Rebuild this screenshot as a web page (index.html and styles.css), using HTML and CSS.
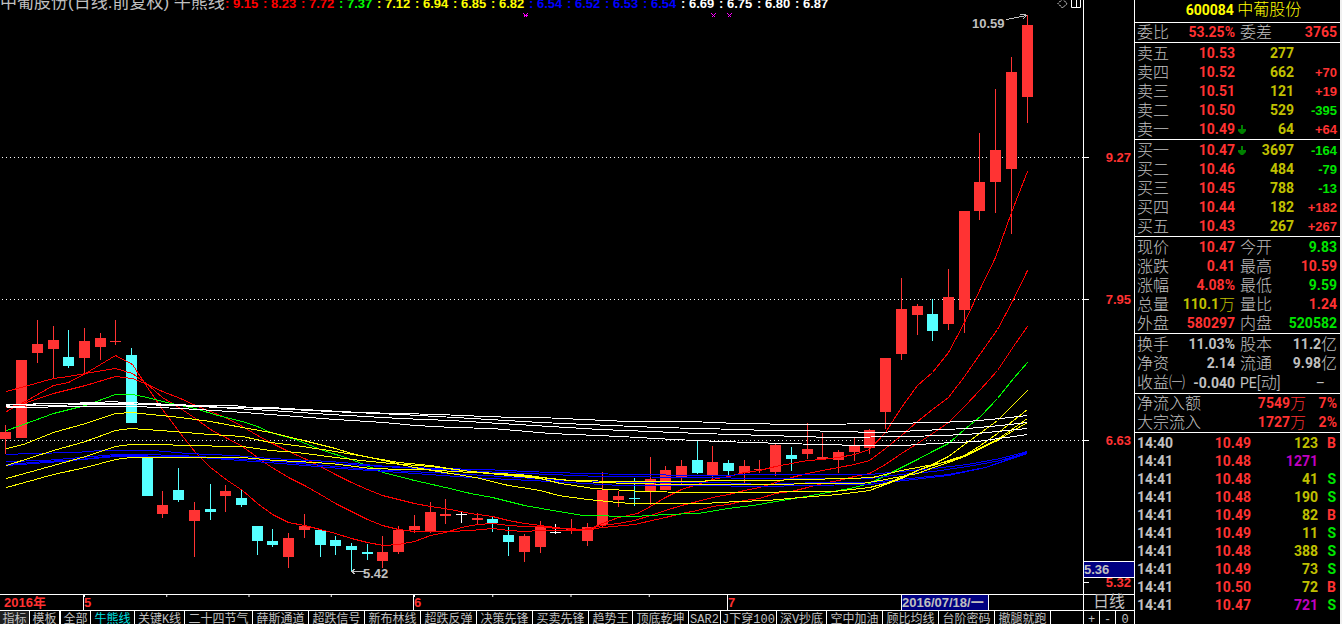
FILE: index.html
```html
<!DOCTYPE html>
<html lang="zh-CN">
<head>
<meta charset="utf-8">
<title>600084 中葡股份</title>
<link rel="stylesheet" href="styles.css">
</head>
<body>
<div class="terminal">
  <main class="board">
    <section class="plot">
      <header class="legend">
        <h1 class="legend-title">中葡股份(日线.前复权) 牛熊线</h1>
        <span class="legend-value red">: 9.15</span><span class="legend-value red">: 8.23</span><span class="legend-value red">: 7.72</span><span class="legend-value lime">: 7.37</span><span class="legend-value yellow">: 7.12</span><span class="legend-value yellow">: 6.94</span><span class="legend-value yellow">: 6.85</span><span class="legend-value yellow">: 6.82</span><span class="legend-value blue">: 6.54</span><span class="legend-value blue">: 6.52</span><span class="legend-value blue">: 6.53</span><span class="legend-value blue">: 6.54</span><span class="legend-value white">: 6.69</span><span class="legend-value white">: 6.75</span><span class="legend-value white">: 6.80</span><span class="legend-value white">: 6.87</span>
        <svg class="legend-icons" width="26" height="12" viewBox="0 0 26 12" fill="none" stroke="#fff"><path d="M5.5 -1L10 3.500L5.500 8L1 3.500Z" stroke-dasharray="2 1"/><path d="M14.500 -2V7.500H23.500V-2M19.500 -2V7.500"/></svg>
      </header>
      <svg class="chart" viewBox="0 12 1083 582" preserveAspectRatio="none" fill="none" shape-rendering="crispEdges">
        <path stroke="#fff" stroke-dasharray="1 3" d="M2 157.500H1083M2 299.500H1083M2 440.500H1083"/>
        <g transform="translate(.5 0)">
          <g stroke="#f33">
            <path d="M5 425V454M37 320V363M53 326V379M84 328V375M100 333V360M115 320V345M162 491V518M194 502V557M225 485V512M288 533V568M304 514V538M382 536V568M398 526V554M414 515V533M430 502V533M445 499V524M477 513V524M524 534V562M540 521V553M571 519V534M587 523V546M602 472V527M618 491V507M650 457V505M665 466V490M681 460V484M712 446V479M744 460V483M759 460V473M775 443V476M807 423V459M822 433V459M838 450V473M854 438V461M869 429V454M885 358V429M901 278V360M917 304V335M948 269V330M964 211V333M979 133V220M995 89V213M1011 57V234M1027 15V123"/>
            <path stroke-width="11" d="M5 432V439M21 360V438M37 344V353M53 340V349M84 341V358M100 338V347M115 341V342M162 505V514M194 510V521M225 491V496M288 538V557M304 526V530M382 552V561M398 530V552M414 526V530M430 512V531M445 514V516M477 518V520M524 536V552M540 527V547M571 529V531M587 527V541M602 490V525M618 496V500M650 479V491M665 470V490M681 466V478M712 462V475M744 466V473M759 469V470M775 445V472M807 449V454M822 457V459M838 452V460M854 446V452M869 430V448M885 358V412M901 309V354M917 306V315M948 297V324M964 211V310M979 182V211M995 150V182M1011 72V169M1027 25V97"/>
          </g>
          <g stroke="#5ff">
            <path d="M68 330V368M131 348V423M178 468V502M210 484V520M241 489V507M257 526V555M272 529V547M320 530V557M335 536V555M351 543V571M367 544V560M492 516V532M508 527V556M634 478V506M697 440V474M728 460V477M791 447V471M932 299V341"/>
            <path stroke-width="11" d="M68 357V366M131 355V423M147 458V496M178 490V500M210 509V512M241 498V505M257 526V541M272 541V545M320 530V545M335 540V546M351 546V550M367 552V554M492 519V523M508 535V542M634 498V499M697 460V473M728 463V471M791 455V459M932 314V331"/>
          </g>
          <g stroke="#fff">
            <path d="M461 511V523M555 524V534"/>
            <path stroke-width="11" d="M461 514V515M555 532V533"/>
          </g>
        </g>
        <g transform="translate(.5 .5)">
          <g stroke="#f00">
            <polyline points="6,411 23,402 53,385 68,382 85,373 100,364 115,355 132,364 147,387 162,409 180,433 195,452 210,467 227,480 242,490 257,503 272,514 288,522 304,525 320,529 335,533 351,538 367,542 383,545 398,544 414,541 430,535 445,532 461,527 477,524 492,523 508,525 524,526 540,526 555,528 571,528 580,529 590,528 602,523 618,517 637,513 650,506 665,497 681,489 697,484 712,479 728,476 744,472 759,470 775,466 791,463 807,460 822,459 838,457 854,454 869,449 885,432 901,407 917,385 932,372 948,352 964,322 980,288 995,257 1011,212 1027,171"/>
            <polyline points="6,391 53,378 68,376 85,373 115,368 132,373 147,384 162,397 180,408 195,418 210,429 227,438 242,446 257,457 270,466 288,477 304,485 320,494 335,503 351,511 367,519 382,525 398,529 414,531 430,531 450,531 470,530 492,528 508,530 524,531 540,530 579,530 602,525 618,523 634,520 650,515 665,510 681,505 697,501 712,497 728,494 744,490 759,487 775,482 791,477 807,473 822,470 838,467 854,464 869,460 885,448 901,435 917,421 932,409 948,397 964,376 980,353 997,329 1013,299 1027,270"/>
            <polyline points="6,407 23,403 53,393 85,385 115,376 132,378 147,384 162,391 180,398 195,405 210,411 227,418 242,426 257,435 270,442 288,451 304,458 320,466 335,474 351,482 367,489 382,495 398,499 414,503 430,506 450,509 470,513 492,516 508,520 524,523 540,525 571,529 590,529 602,527 634,524 665,517 681,513 697,510 712,506 728,504 744,500 759,498 775,493 791,491 807,487 822,483 838,480 854,476 869,473 885,464 901,453 917,443 932,433 948,422 964,406 980,389 997,370 1013,346 1027,326"/>
          </g>
          <polyline stroke="#0f0" points="6,430 23,424 53,413 85,405 115,394 132,394 147,397 162,401 180,405 195,408 217,415 242,421 257,426 270,432 295,439 320,449 351,459 383,472 414,480 445,487 470,493 492,497 524,505 558,511 583,515 634,516 665,514 697,513 728,508 759,504 775,501 800,497 833,491 854,487 869,483 885,475 901,467 917,459 932,451 948,443 964,429 980,416 997,398 1013,378 1027,362"/>
          <g stroke="#00f">
            <polyline points="6,454 30,453 75,452 100,450 153,450 187,453 233,455 270,458 330,461 387,466 437,468 483,469 550,472 627,474 703,475 767,474 800,474 869,474 900,471 933,468 967,464 1000,458 1027,451"/>
            <polyline points="6,461 45,460 80,457 115,454 140,454 180,455 230,458 280,461 330,463 400,467 480,471 550,474 600,476 700,477 760,478 820,478 869,478 900,474 933,471 967,466 1000,460 1027,452"/>
            <polyline points="6,464 45,461 80,459 115,455 180,456 230,458 280,461 300,463 370,469 450,473 520,477 560,480 630,482 720,482 760,484 820,482 869,482 900,479 948,474 985,467 1027,453"/>
            <polyline points="6,465 60,461 115,456 200,457 280,463 340,468 400,472 470,477 550,481 620,485 720,485 740,486 767,486 800,485 869,484 948,475 985,467 1027,452"/>
          </g>
          <g stroke="#ff0">
            <polyline points="6,448 23,444 53,432 85,423 115,413 132,412 150,414 180,417 210,421 242,427 270,432 303,440 335,448 351,453 383,460 414,467 450,473 475,477 508,485 540,490 558,495 587,499 618,502 630,503 703,503 737,501 767,500 800,497 838,494 869,490 901,478 917,470 932,464 948,456 964,444 997,420 1027,390"/>
            <polyline points="6,465 53,450 85,441 115,430 130,428 160,430 210,434 242,436 270,442 295,445 335,451 370,457 398,462 430,465 442,467 470,471 508,475 540,478 560,483 580,486 593,488 643,491 690,492 757,492 800,491 833,491 869,487 885,483 901,477 917,470 948,460 964,455 980,445 997,433 1013,420 1027,409"/>
            <polyline points="6,478 53,465 85,456 115,446 130,444 165,444 180,445 242,446 270,450 297,452 335,457 370,461 390,463 430,466 470,471 520,475 568,480 627,481 703,481 707,480 767,480 800,479 850,478 872,477 901,470 933,464 948,461 964,455 997,439 1027,418"/>
            <polyline points="6,487 53,474 85,467 115,459 130,457 170,457 242,457 275,460 297,461 330,463 370,468 405,469 423,469 470,472 520,474 550,478 580,481 627,483 680,484 767,484 820,483 862,483 885,479 901,476 917,473 933,467 948,462 964,456 997,440 1013,430 1027,422"/>
          </g>
          <g stroke="#fff">
            <polyline points="6,405 13,404 60,403 100,402 110,401 125,402 150,403 170,404 200,405 233,405 250,407 270,407 303,409 360,412 438,414 485,416 516,417 540,417 627,421 690,421 737,423 800,424 893,423 933,422 967,421 1000,418 1027,415"/>
            <polyline points="6,404 60,403 120,403 200,406 233,407 270,408 330,411 400,414 455,417 540,422 611,425 658,427 740,429 767,430 800,430 877,432 920,430 967,428 1000,425 1027,422"/>
            <polyline points="6,406 45,405 90,404 140,404 200,406 270,410 330,414 400,418 450,420 550,426 600,429 650,431 700,433 767,435 831,437 910,436 967,434 1027,428"/>
            <polyline points="6,407 45,407 50,406 135,406 180,408 230,411 270,414 335,419 383,422 415,425 453,427 492,428 550,433 620,436 673,439 720,441 783,443 820,444 863,445 903,445 933,443 977,441 1027,434"/>
          </g>
          <path stroke="#f0f" d="M523 13L527 17M527 13L523 17M523 15H527M711 13L715 17M715 13L711 17M727 13L731 17M731 13L727 17"/>
          <path stroke="#c0c0c0" d="M1006 19L1026 15M1019 14H1024L1026 15L1022 19M363 571H351M355 568L351 571L355 574"/>
        </g>
        <text class="mark" x="972" y="28">10.59</text>
        <text class="mark" x="363" y="578">5.42</text>
      </svg>
    </section>
    <aside class="axis">
      <svg class="axis-scale" viewBox="0 0 50 594" preserveAspectRatio="none" shape-rendering="crispEdges">
        <path stroke="#fff" d="M0 157.500H5M0 299.500H5M0 440.500H5M0 582.500H5"/>
        <text class="scale" x="47" y="162">9.27</text>
        <text class="scale" x="47" y="304">7.95</text>
        <text class="scale" x="47" y="445">6.63</text>
        <text class="scale" x="47" y="587">5.32</text>
        <rect y="561" width="50" height="17" fill="#000080"/>
        <path stroke="#fff" d="M0 561.500H50M0 577.500H50"/>
        <text class="mark" x="0" y="574">5.36</text>
      </svg>
    </aside>
    <div class="timeline">
      <span class="month first">2016年</span><span class="month ticks">5</span><span class="month ticks">6</span><span class="month">7</span><time class="cursor-date">2016/07/18/一</time><span class="month"></span>
    </div>
    <div class="period">日线</div>
    <nav class="tabs">
      <button class="tab w2 pressed">指标</button><button class="tab w2">模板</button><button class="tab w2 group">全部</button><button class="tab w3 current">牛熊线</button><button class="tab w35">关键K线</button><button class="tab w5">二十四节气</button><button class="tab w4">薛斯通道</button><button class="tab w4">超跌信号</button><button class="tab w4">新布林线</button><button class="tab w4">超跌反弹</button><button class="tab w4">决策先锋</button><button class="tab w4">买卖先锋</button><button class="tab w3">趋势王</button><button class="tab w4">顶底乾坤</button><button class="tab w2s">SAR2</button><button class="tab w4">J下穿100</button><button class="tab w35">深V抄底</button><button class="tab w4">空中加油</button><button class="tab w4">顾比均线</button><button class="tab w4">台阶密码</button><button class="tab w4">撤腿就跑</button>
    </nav>
    <div class="zoom">
      <button class="zoom-key">+</button><button class="zoom-key">-</button><button class="zoom-key">0</button>
    </div>
  </main>
  <aside class="quote">
    <h2 class="stock">600084 <span class="stock-name">中葡股份</span></h2>
    <table class="panel pairs single">
      <tr><th>委比</th><td class="red">53.25%</td><th>委差</th><td class="red">3765</td></tr>
    </table>
    <table class="panel book">
      <tr><th>卖五</th><td class="red">10.53</td><td></td><td class="gold">277</td><td></td></tr>
      <tr><th>卖四</th><td class="red">10.52</td><td></td><td class="gold">662</td><td class="delta red">+70</td></tr>
      <tr><th>卖三</th><td class="red">10.51</td><td></td><td class="gold">121</td><td class="delta red">+19</td></tr>
      <tr><th>卖二</th><td class="red">10.50</td><td></td><td class="gold">529</td><td class="delta green">-395</td></tr>
      <tr><th>卖一</th><td class="red">10.49</td><td><svg class="down" width="9" height="10" viewBox="0 0 9 10"><path d="M3 0h2v4h3v2L5 9H3L0 6V4h3z"/></svg></td><td class="gold">64</td><td class="delta red">+64</td></tr>
    </table>
    <table class="panel book">
      <tr><th>买一</th><td class="red">10.47</td><td><svg class="down" width="9" height="10" viewBox="0 0 9 10"><path d="M3 0h2v4h3v2L5 9H3L0 6V4h3z"/></svg></td><td class="gold">3697</td><td class="delta green">-164</td></tr>
      <tr><th>买二</th><td class="red">10.46</td><td></td><td class="gold">484</td><td class="delta green">-79</td></tr>
      <tr><th>买三</th><td class="red">10.45</td><td></td><td class="gold">788</td><td class="delta green">-13</td></tr>
      <tr><th>买四</th><td class="red">10.44</td><td></td><td class="gold">182</td><td class="delta red">+182</td></tr>
      <tr><th>买五</th><td class="red">10.43</td><td></td><td class="gold">267</td><td class="delta red">+267</td></tr>
    </table>
    <table class="panel pairs">
      <tr><th>现价</th><td class="red">10.47</td><th>今开</th><td class="green">9.83</td></tr>
      <tr><th>涨跌</th><td class="red">0.41</td><th>最高</th><td class="red">10.59</td></tr>
      <tr><th>涨幅</th><td class="red">4.08%</td><th>最低</th><td class="green">9.59</td></tr>
      <tr><th>总量</th><td class="gold">110.1<span class="unit">万</span></td><th>量比</th><td class="red">1.24</td></tr>
      <tr><th>外盘</th><td class="red">580297</td><th>内盘</th><td class="green">520582</td></tr>
    </table>
    <table class="panel pairs roomy">
      <tr><th>换手</th><td>11.03%</td><th>股本</th><td>11.2<span class="unit">亿</span></td></tr>
      <tr><th>净资</th><td>2.14</td><th>流通</th><td>9.98<span class="unit">亿</span></td></tr>
      <tr><th>收益㈠</th><td>-0.040</td><th><b>PE</b>[动]</th><td class="none">–</td></tr>
    </table>
    <table class="panel flow single">
      <tr><th>净流入额</th><td class="red">7549<span class="unit">万</span></td><td class="red">7%</td></tr>
      <tr><th>大宗流入</th><td class="red">1727<span class="unit">万</span></td><td class="red">2%</td></tr>
    </table>
    <table class="panel trades">
      <tr><td>14:40</td><td class="red">10.49</td><td class="gold">123</td><td class="red">B</td></tr>
      <tr><td>14:41</td><td class="red">10.48</td><td class="purple">1271</td><td></td></tr>
      <tr><td>14:41</td><td class="red">10.48</td><td class="gold">41</td><td class="green">S</td></tr>
      <tr><td>14:41</td><td class="red">10.48</td><td class="gold">190</td><td class="green">S</td></tr>
      <tr><td>14:41</td><td class="red">10.49</td><td class="gold">82</td><td class="red">B</td></tr>
      <tr><td>14:41</td><td class="red">10.49</td><td class="gold">11</td><td class="green">S</td></tr>
      <tr><td>14:41</td><td class="red">10.48</td><td class="gold">388</td><td class="green">S</td></tr>
      <tr><td>14:41</td><td class="red">10.49</td><td class="gold">73</td><td class="green">S</td></tr>
      <tr><td>14:41</td><td class="red">10.50</td><td class="gold">72</td><td class="red">B</td></tr>
      <tr><td>14:41</td><td class="red">10.47</td><td class="purple">721</td><td class="green">S</td></tr>
    </table>
  </aside>
</div>
</body>
</html>
```
FILE: styles.css
```css
* { box-sizing: border-box; }

body {
  margin: 0;
  overflow: hidden;
  background: #000;
  color: #c0c0c0;
  font-family: Roboto, "Noto Sans CJK SC", sans-serif;
  font-size: 14px;
}

.terminal {
  display: grid;
  grid-template-columns: minmax(0, 1fr) 208px;
  height: 100vh;
}

.red { color: #ff3232; }
.green { color: #00e600; }
.gold { color: #c0c000; }
.purple { color: #c000c0; }
.lime { color: #0f0; }
.yellow { color: #ff0; }
.blue { color: #00f; }
.white { color: #fff; }

/* Left board: chart, price axis, time axis, indicator tabs */
.board {
  display: grid;
  grid-template-columns: minmax(0, 1fr) 51px;
  grid-template-rows: minmax(0, 1fr) 16px 14px;
  min-height: 0;
}

.plot {
  display: flex;
  flex-direction: column;
  min-height: 0;
}

.legend {
  display: flex;
  align-items: flex-end;
  height: 12px;
  overflow: hidden;
  white-space: nowrap;
}

.legend-title {
  flex: 0 0 225px;
  margin: 0;
  font: 400 17px/18px "Liberation Sans", "Noto Sans CJK SC", sans-serif;
}

.legend-value {
  flex: 0 0 38px;
  font: 700 13px/17px "Liberation Sans", sans-serif;
}

.legend-value.red { color: #f00; }

.legend-icons { margin-left: auto; }

.chart, .axis-scale {
  display: block;
  width: 100%;
  flex: 1;
  min-height: 0;
}

.mark, .scale {
  font: 700 13px "Liberation Sans", sans-serif;
  fill: #c0c0c0;
}

.scale {
  fill: #ff3232;
  text-anchor: end;
}

.axis {
  display: flex;
  min-height: 0;
  border-left: 1px solid #fff;
}

.timeline {
  display: grid;
  grid-template-columns: 83fr 330fr 314fr 174fr 87fr 95fr;
  border-top: 1px solid #fff;
  color: #ff3232;
  font: 700 13px/16px "Liberation Sans", "Noto Sans CJK SC", sans-serif;
  white-space: nowrap;
}

.month {
  overflow: hidden;
  border-left: 1px solid #fff;
}

.month.first {
  padding-left: 4px;
  border-left: 0;
}

.month.ticks {
  background: linear-gradient(to right, #fff 1px, transparent 1px) 0 0 / 25% 2px repeat-x;
}

.cursor-date {
  overflow: hidden;
  border-left: 1px solid #fff;
  background: #000080;
  color: #c0c0c0;
}

.period {
  border-top: 1px solid #fff;
  border-left: 1px solid #fff;
  font-size: 16px;
  line-height: 14px;
  text-align: center;
}

.tabs {
  display: flex;
  overflow: hidden;
  border-top: 1px solid #fff;
}

.tab, .zoom-key {
  height: 17px;
  padding: 0;
  border: 0;
  border-right: 1px solid #fff;
  background: #000;
  color: #c0c0c0;
  font: 400 12px/16px "Liberation Mono", "Noto Sans CJK SC", monospace;
  white-space: nowrap;
}

.tab { flex: none; }
.tab.w2 { width: 30px; }
.tab.group {
  width: 31px;
  border-left: 1px solid #fff;
}
.tab.w2s { width: 32px; }
.tab.w3 { width: 44px; }
.tab.w35 { width: 50px; }
.tab.w4 { width: 56px; }
.tab.w5 { width: 68px; }
.tab.pressed { background: #202020; }
.tab.current { color: #00e0e0; }

.zoom {
  display: grid;
  grid-template-columns: 16px 16px 1fr;
  overflow: hidden;
  border-top: 1px solid #fff;
  border-left: 1px solid #fff;
}

.zoom-key:last-child { border-right: 0; }

/* Right quote column */
.quote {
  overflow: hidden;
  border-right: 2px solid #f0f0f0;
  border-left: 1px solid #fff;
}

.stock {
  height: 23px;
  margin: 0;
  padding-left: 12px;
  border-bottom: 1px solid #fff;
  color: #ff0;
  font-size: 14px;
  font-weight: 700;
  line-height: 19px;
  text-align: center;
  white-space: nowrap;
}

.stock-name, .unit {
  font-size: 16px;
  font-weight: 300;
}

.panel {
  display: block;
  padding: 1px 3px 0 2px;
  border-bottom: 1px solid #fff;
  border-spacing: 0;
  font-weight: 700;
  white-space: nowrap;
}

.panel.single { padding-top: 0; }
.panel.roomy { padding-bottom: 1px; }

.panel tbody { display: block; }

.panel tr {
  display: grid;
  height: 19px;
}

.panel th, .panel td {
  min-width: 0;
  padding: 0;
  line-height: 19px;
}

.panel th {
  font-size: 16px;
  font-weight: 300;
  text-align: left;
}

.panel th b { font-size: 14px; }

.panel td {
  display: flex;
  align-items: center;
  justify-content: flex-end;
}

.pairs tr { grid-template-columns: 36px 62px 42px 1fr; }
.pairs th:nth-child(3) { padding-left: 5px; }
.pairs .none { padding-right: 12px; font-weight: 400; }

.book tr { grid-template-columns: 36px 62px 12px 47px 1fr; }
.book .delta { font: 700 13px/19px "Liberation Sans", sans-serif; }

.down { fill: #008000; }

.flow tr { grid-template-columns: 70px 99px 1fr; }

.trades { border-bottom: 0; }

.trades tr {
  grid-template-columns: 40px 74px 67px 1fr;
  height: 18px;
}

.panel.trades td { line-height: 18px; }
.trades td:first-child { justify-content: flex-start; }
.trades td:last-child { padding-right: 1px; }
```
